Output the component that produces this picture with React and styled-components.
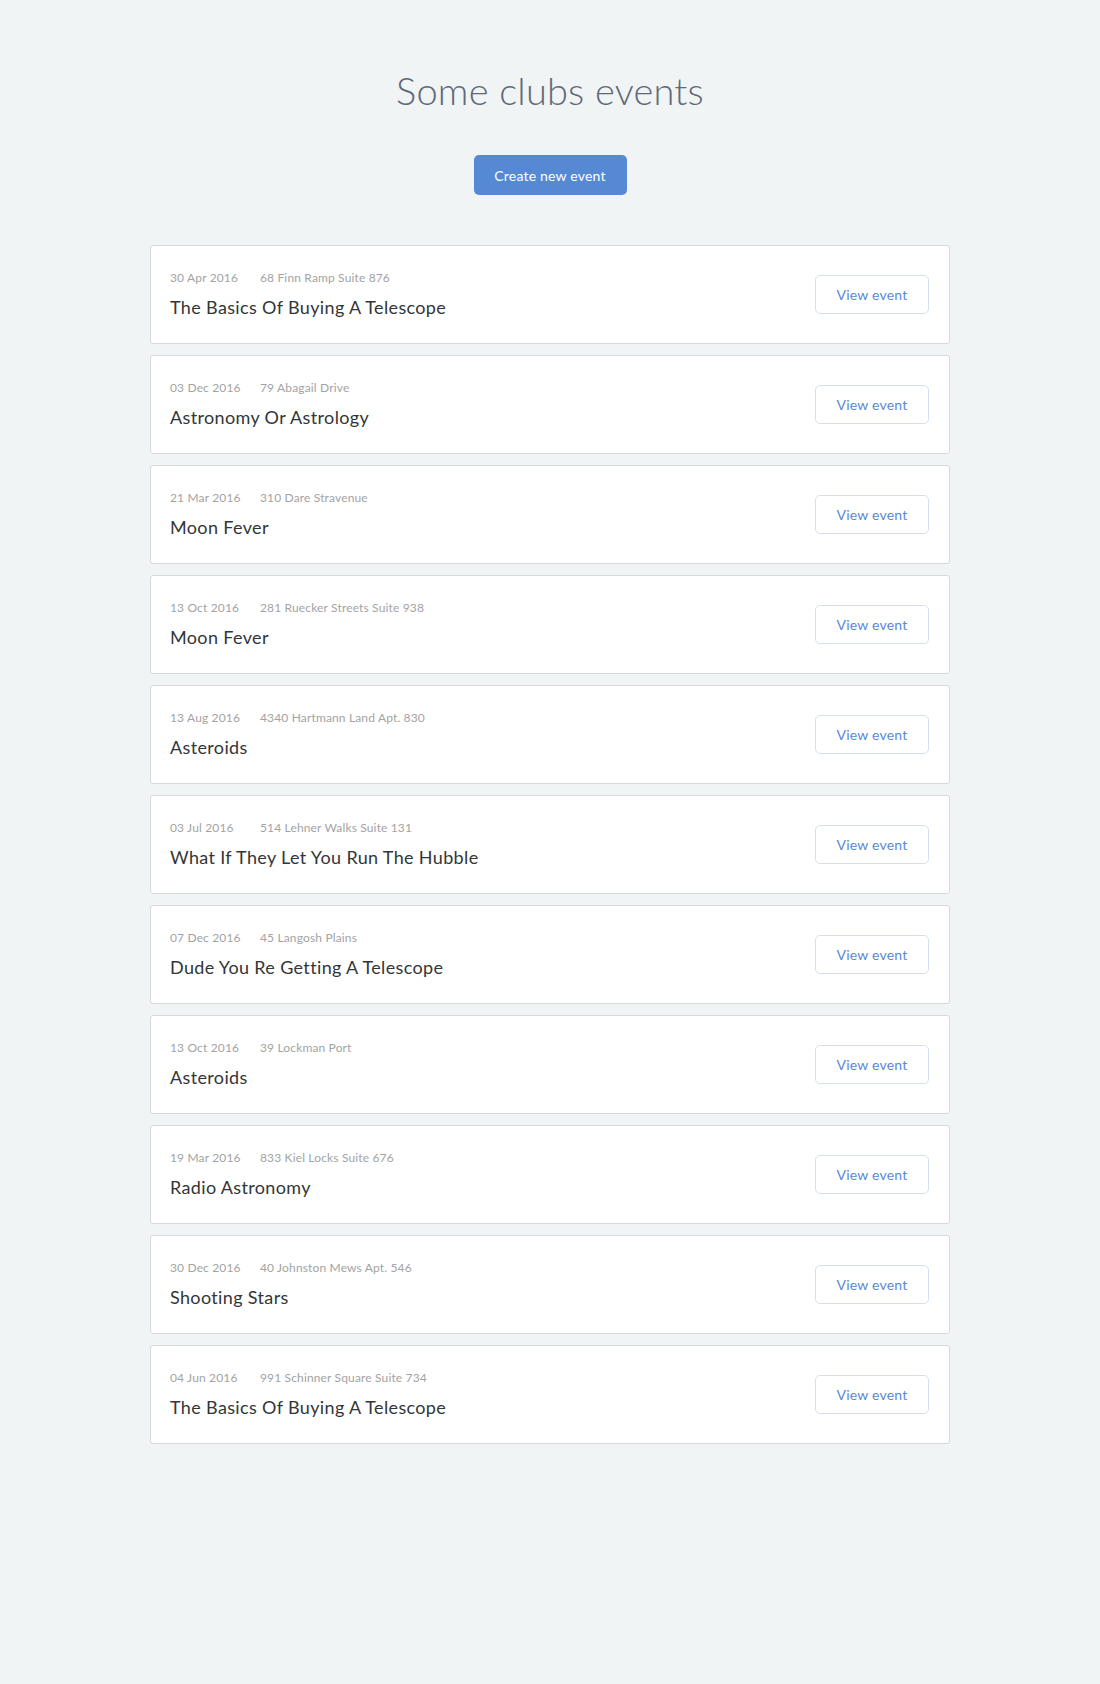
import React from "react";
import styled, { createGlobalStyle } from "styled-components";

const GlobalStyle = createGlobalStyle`
  html, body { margin: 0; padding: 0; background: #f1f4f5; }
  body { font-family: Lato, "Noto Sans", sans-serif; -webkit-font-smoothing: antialiased; }
  * { box-sizing: border-box; }
`;

const Page = styled.main`
  min-height: 1684px;
  background: #f1f4f5;
  padding: 65px 0 80px;
  display: flex;
  flex-direction: column;
  align-items: center;
`;

const Title = styled.h1`
  margin: 0;
  font-family: Lato, "Noto Sans", sans-serif;
  font-weight: 300;
  font-size: 38px;
  line-height: 50px;
  color: #5e6978;
  letter-spacing: 0.2px;
`;

const PrimaryButton = styled.button`
  margin-top: 40px;
  width: 153px;
  height: 40px;
  border: none;
  border-radius: 5px;
  background: #5589d3;
  color: #ffffff;
  font-family: Lato, "Noto Sans", sans-serif;
  font-size: 14px;
  letter-spacing: 0.2px;
  cursor: pointer;
`;

const List = styled.ul`
  list-style: none;
  margin: 50px 0 0;
  padding: 0;
  width: 800px;
  display: flex;
  flex-direction: column;
  gap: 11px;
`;

const Card = styled.li`
  display: flex;
  align-items: center;
  justify-content: space-between;
  height: 99px;
  padding: 0 20px 0 19px;
  background: #ffffff;
  border: 1px solid #d6dadd;
  border-radius: 3px;
`;

const Info = styled.div`
  display: flex;
  flex-direction: column;
  gap: 9px;
`;

const Meta = styled.div`
  display: flex;
  font-size: 12px;
  line-height: 16px;
  color: #a3a3a3;
  letter-spacing: 0.15px;
`;

const DateText = styled.span`
  width: 90px;
`;

const EventTitle = styled.div`
  font-size: 18px;
  line-height: 24px;
  color: #333638;
  letter-spacing: 0.35px;
`;

const ViewButton = styled.button`
  width: 114px;
  height: 39px;
  background: #ffffff;
  border: 1px solid #d3e0f2;
  border-radius: 5px;
  color: #5a89d4;
  font-family: Lato, "Noto Sans", sans-serif;
  font-size: 14px;
  letter-spacing: 0.2px;
  cursor: pointer;
`;

const events = [
  ["30 Apr 2016", "68 Finn Ramp Suite 876", "The Basics Of Buying A Telescope"],
  ["03 Dec 2016", "79 Abagail Drive", "Astronomy Or Astrology"],
  ["21 Mar 2016", "310 Dare Stravenue", "Moon Fever"],
  ["13 Oct 2016", "281 Ruecker Streets Suite 938", "Moon Fever"],
  ["13 Aug 2016", "4340 Hartmann Land Apt. 830", "Asteroids"],
  ["03 Jul 2016", "514 Lehner Walks Suite 131", "What If They Let You Run The Hubble"],
  ["07 Dec 2016", "45 Langosh Plains", "Dude You Re Getting A Telescope"],
  ["13 Oct 2016", "39 Lockman Port", "Asteroids"],
  ["19 Mar 2016", "833 Kiel Locks Suite 676", "Radio Astronomy"],
  ["30 Dec 2016", "40 Johnston Mews Apt. 546", "Shooting Stars"],
  ["04 Jun 2016", "991 Schinner Square Suite 734", "The Basics Of Buying A Telescope"],
];

export default function App() {
  return (
    <>
      <GlobalStyle />
      <Page>
        <Title>Some clubs events</Title>
        <PrimaryButton>Create new event</PrimaryButton>
        <List>
          {events.map(([date, address, title], i) => (
            <Card key={i}>
              <Info>
                <Meta>
                  <DateText>{date}</DateText>
                  <span>{address}</span>
                </Meta>
                <EventTitle>{title}</EventTitle>
              </Info>
              <ViewButton>View event</ViewButton>
            </Card>
          ))}
        </List>
      </Page>
    </>
  );
}
